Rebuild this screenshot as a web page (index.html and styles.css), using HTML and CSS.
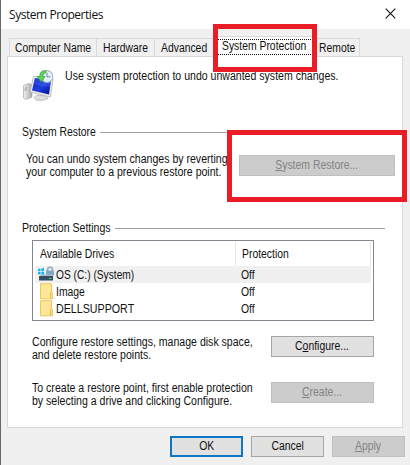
FILE: index.html
```html
<!DOCTYPE html>
<html lang="en">
<head>
  <meta charset="UTF-8" />
  <meta name="viewport" content="width=device-width, initial-scale=1" />
  <title>System Properties</title>
  <link rel="stylesheet" href="styles.css">
</head>
<body>

  <div class="window">
    <!-- Title bar -->
    <div class="titlebar">
      <span class="title">System Properties</span>
      <svg class="close" width="11" height="11" viewBox="0 0 11 11">
        <path d="M0.7 0.7L10.3 10.3M10.3 0.7L0.7 10.3" stroke="#111" stroke-width="1.1" />
      </svg>
    </div>

    <!-- Tabs -->
    <div class="tabs">
      <div class="tab tab-computer"><span class="text">Computer Name</span></div>
      <div class="tab tab-hardware"><span class="text">Hardware</span></div>
      <div class="tab tab-advanced"><span class="text">Advanced</span></div>
      <div class="tab active">
        <div class="focus"><span class="text">System Protection</span></div>
        <div class="mark mark-tab"></div>
      </div>
      <div class="tab tab-remote"><span class="text">Remote</span></div>
    </div>

    <div class="panel">
      <div class="intro">
        <svg width="32" height="32" viewBox="0 0 32 32">
          <defs>
            <linearGradient id="screen" x1="0" y1="0" x2="1" y2="1">
              <stop offset="0" stop-color="#0a1cae" />
              <stop offset="0.5" stop-color="#1f3fe0" />
              <stop offset="1" stop-color="#000f8c" />
            </linearGradient>
            <linearGradient id="case" x1="0" y1="0" x2="1" y2="0">
              <stop offset="0" stop-color="#f2f2f2" />
              <stop offset="1" stop-color="#a9a9a9" />
            </linearGradient>
          </defs>
          <path d="M1.5 15.5L7 13.5L10 15V27L3.5 29.5L1.5 28Z" fill="url(#case)" stroke="#999" stroke-width="0.6" />
          <path d="M2.6 18.4L5 17.6M2.6 20.4L5 19.6" stroke="#888" stroke-width="0.8" />
          <path d="M15 25L24 26L26 28.5Q21 31.8 14 30L12 27.5Z" fill="#dedede" stroke="#a5a5a5" stroke-width="0.6" />
          <path d="M11.5 6L31 9L28.5 27L8 22Z" fill="#ececec" stroke="#aaa" stroke-width="0.7" />
          <path d="M13 8L29 10.6L27 24.6L10 20.6Z" fill="url(#screen)" />
          <path d="M13 8L29 10.6L28 17Q20 17 11.5 14Z" fill="#567cff" opacity="0.3" />
          <circle cx="25" cy="6.5" r="5.9" fill="#e2f1f7" stroke="#a3bac8" stroke-width="1.1" />
          <path d="M25 2.8V6.8H28.5" fill="none" stroke="#6d8da4" stroke-width="1" />
          <path d="M23.5 0.5Q17.5 0.6 17.8 6.5H15.2L19.3 12L23 6.5H20.6Q20.4 3.2 24 2.6Z" fill="#5fd352" stroke="#2f9a34" stroke-width="0.7" />
        </svg>
        <p>Use system protection to undo unwanted system changes.</p>
      </div>

      <!-- System Restore -->
      <div class="group-title"><span class="text title-restore">System Restore</span></div>
      <div class="restore">
        <p>You can undo system changes by reverting<br>your computer to a previous restore point.</p>
        <button class="btn" disabled><span><u>S</u>ystem Restore...</span></button>
        <div class="mark mark-restore"></div>
      </div>

      <!-- Protection Settings -->
      <div class="group-title"><span class="text title-settings">Protection Settings</span></div>
      <div class="drives">
        <div class="row head">
          <div class="name"><span class="text">Available Drives</span></div>
          <div class="state"><span class="text">Protection</span></div>
        </div>
        <div class="row selected">
          <svg width="16" height="17" viewBox="0 0 16 17">
            <path d="M0 3L2.5 2.6V5.2H0ZM3.3 2.5L6 2.1V5.2H3.3ZM0 6H2.5V8.6L0 8.2ZM3.3 6H6V9L3.3 8.6Z" fill="#16b3e8" />
            <path d="M9.5 6V4Q9.5 1.3 12 1.3T14.5 4V5" fill="none" stroke="#8fa9bd" stroke-width="1.5" />
            <rect x="8" y="4.5" width="8" height="5" fill="#7fa6c5" />
            <path d="M3 8.5H14L15.5 10.5H1Z" fill="#a9b9c4" />
            <rect x="1" y="10" width="14" height="4.5" rx="0.6" fill="#354f62" />
            <rect x="11" y="12" width="2.5" height="1" fill="#55dd8c" />
          </svg>
          <div class="name"><span class="text os">OS (C:) (System)</span></div>
          <div class="state"><span class="text">Off</span></div>
        </div>
        <div class="row">
          <svg width="16" height="17" viewBox="0 0 16 17">
            <path d="M2.5 0.7H13.5V8.8L14.5 9.5V15.8H2.5Z" fill="#ffe597" stroke="#eac65d" />
            <path d="M12.5 15.5V9.5L13.5 8.5" fill="none" stroke="#e5b944" />
          </svg>
          <div class="name"><span class="text">Image</span></div>
          <div class="state"><span class="text">Off</span></div>
        </div>
        <div class="row">
          <svg width="16" height="17" viewBox="0 0 16 17">
            <path d="M2.5 0.7H13.5V8.8L14.5 9.5V15.8H2.5Z" fill="#ffe597" stroke="#eac65d" />
            <path d="M12.5 15.5V9.5L13.5 8.5" fill="none" stroke="#e5b944" />
          </svg>
          <div class="name"><span class="text caps">DELLSUPPORT</span></div>
          <div class="state"><span class="text">Off</span></div>
        </div>
      </div>

      <div class="action">
        <p>Configure restore settings, manage disk space,<br>and delete restore points.</p>
        <button class="btn"><span>C<u>o</u>nfigure...</span></button>
      </div>
      <div class="action">
        <p>To create a restore point, first enable protection<br>by selecting a drive and clicking Configure.</p>
        <button class="btn" disabled><span><u>C</u>reate...</span></button>
      </div>
    </div>

    <div class="footer">
      <button class="btn primary"><span>OK</span></button>
      <button class="btn"><span>Cancel</span></button>
      <button class="btn" disabled><span><u>A</u>pply</span></button>
    </div>
  </div>

</body>
</html>
```
FILE: styles.css
```css
* {
  box-sizing: border-box;
}

body {
  margin: 0;
  font-family: "Liberation Sans", Arial, sans-serif;
  font-size: 12px;
  line-height: 13px;
  color: #111;
  white-space: nowrap;
  overflow: hidden;
}

/* condensed dialog text */
p {
  margin: 0;
  transform: scaleX(0.88);
  transform-origin: left;
}

.text {
  display: inline-block;
  transform: scaleX(0.865);
  transform-origin: left;
}

svg {
  display: block;
  flex: none;
}

.window {
  width: 410px;
  height: 465px;
  background: #f0f0f0;
  border-left: 1px solid #6a6768;
}

.titlebar {
  display: flex;
  justify-content: space-between;
  height: 29px;
  padding: 8px 14px 0 8px;
  background: white;
}

.title {
  font-family: "Open Sans", "Noto Sans", sans-serif;
  font-size: 12px;
  letter-spacing: -0.45px;
}

.tabs {
  display: flex;
  align-items: flex-end;
  height: 27px;
  padding-left: 8px;
}

.tab {
  height: 18px;
  padding: 3px 0 0 5px;
  border: 1px solid #d9d9d9;
  border-width: 1px 1px 0 0;
}

.tab-computer {
  width: 88px;
  border-left-width: 1px;
}

.tab-hardware {
  width: 58px;
  padding-left: 6px;
}

.tab-advanced {
  width: 60px;
  padding-left: 6px;
  border-right: none;
}

.tab.active {
  position: relative;
  width: 102px;
  height: 21px;
  margin-bottom: -1px;
  padding: 2px 0 0 1px;
  background: white;
  border-left-width: 1px;
}

.focus {
  width: 96px;
  height: 16px;
  padding-left: 4px;
  border: 1px dotted #111;
}

.tab-remote {
  width: 43px;
  padding-left: 2px;
}

/* red highlight frames */
.mark {
  position: absolute;
  border: 5px solid #ea1c25;
}

.mark-tab {
  left: -3px;
  top: -13px;
  width: 104px;
  height: 48px;
  z-index: 2;
}

.mark-restore {
  left: 220px;
  top: -9px;
  width: 180px;
  height: 72px;
}

.panel {
  width: 396px;
  height: 372px;
  margin-left: 6px;
  padding: 13px 0 0 14px;
  background: white;
  border: 1px solid #d9d9d9;
}

.intro {
  display: flex;
  gap: 11px;
  height: 56px;
}

.group-title {
  display: flex;
  align-items: center;
  gap: 5px;
  width: 363px;
  height: 13px;
}

.group-title::after {
  content: "";
  flex: 1;
  height: 1px;
  background: #a0a0a0;
}

.title-restore {
  width: 73px;
}

.title-settings {
  width: 88px;
  transform: scaleX(0.88);
}

.restore {
  position: relative;
  display: flex;
  height: 83px;
  margin-left: -15px;
  padding: 14px 0 0 19px;
}

.restore p {
  width: 213px;
}

.restore .btn {
  width: 156px;
  margin-top: 2px;
}

.btn {
  flex: none;
  height: 21px;
  padding: 0;
  border: 1px solid #a6a6a6;
  background: #e1e1e1;
  color: #111;
  font: inherit;
}

.btn span {
  display: inline-block;
  transform: scaleX(0.87);
}

.btn:disabled {
  background: #cccccc;
  border-color: #bfbfbf;
  color: #838383;
}

.drives {
  width: 342px;
  height: 81px;
  margin: 5px 0 15px 10px;
  padding: 1px 2px;
  border: 1px solid #828790;
}

.row {
  display: flex;
  align-items: center;
  height: 17px;
  padding-left: 3px;
}

.row .name {
  width: 181px;
  padding: 2px 0 0 2px;
}

.row .os {
  transform: scaleX(0.85);
}

.row .caps {
  transform: scaleX(0.89);
}

.row .state {
  padding: 2px 0 0 6px;
}

.row.head {
  height: 24px;
  padding-left: 5px;
  border-right: 1px solid #e5e5e5;
}

.head .name {
  width: 195px;
  padding: 0;
}

.row.head .name {
  width: 195px;
  padding: 0;
}

.row.head .state {
  height: 24px;
  padding-top: 6px;
  border-left: 1px solid #e5e5e5;
}

.selected {
  background: #f0f0f0;
}

.action {
  display: flex;
  width: 342px;
  height: 46px;
  margin-left: 10px;
}

.action p {
  width: 239px;
  height: 26px;
}

.action .btn {
  width: 103px;
}

.footer {
  display: flex;
  justify-content: flex-end;
  gap: 8px;
  padding: 8px 5px 0 0;
}

.footer .btn {
  width: 73px;
}

.footer .primary {
  border: 2px solid #0f75c5;
}
```
